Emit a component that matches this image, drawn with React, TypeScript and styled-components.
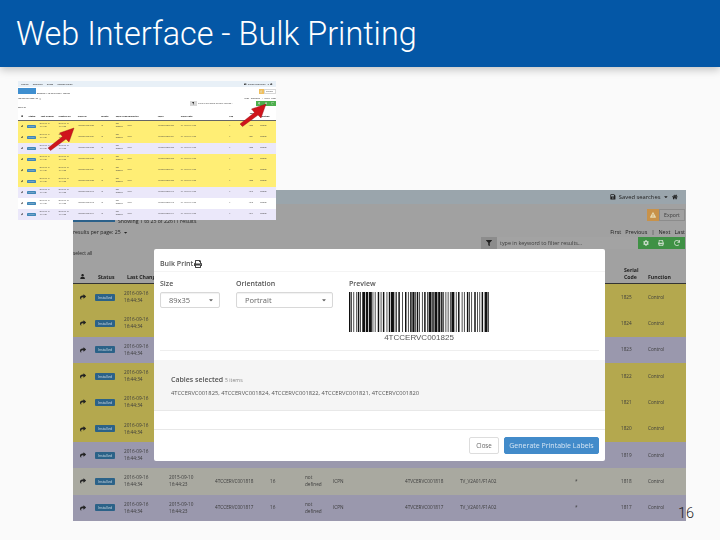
import React from 'react';
import styled, { ThemeProvider, createGlobalStyle } from 'styled-components';
import {
  FaCaretDown,
  FaCog,
  FaExclamationTriangle,
  FaFilter,
  FaHome,
  FaPrint,
  FaRedo,
  FaSave,
  FaShare,
  FaUser,
} from 'react-icons/fa';

const bright = {
  page: '#ffffff',
  nav: '#e8f0f7',
  logo: '#3f8fd0',
  hi: '#ffee75',
  alt: '#ebe8fa',
  plain: '#ffffff',
  ink: '#444444',
  strong: '#222222',
  rule: '#666666',
  badge: '#3f86b8',
  green: '#4cae4c',
  orange: '#f0c060',
  input: '#ffffff',
  line: '#d8d8d8',
};

const dimmed = {
  page: '#a1a1a1',
  nav: '#9aa5ac',
  logo: '#2b618a',
  hi: '#b4a84e',
  alt: '#9a98ad',
  plain: '#a9a9a0',
  ink: '#3c3c3c',
  strong: '#222222',
  rule: '#333333',
  badge: '#2b6288',
  green: '#3f9145',
  orange: '#c8924a',
  input: '#a3a3a3',
  line: '#8c8c8c',
};

const COLUMNS = '20px 31px 45px 46px 55px 35px 28px 72px 55px 115px 46px 27px 38px';

const GlobalStyle = createGlobalStyle`
  html, body {
    margin: 0;
    padding: 0;
    background: #fafafa;
  }
`;

const Slide = styled.div`
  position: relative;
  width: 720px;
  height: 540px;
  overflow: hidden;
  background: #fafafa;
  font-family: 'Open Sans', 'Liberation Sans', sans-serif;
`;

const Banner = styled.header`
  height: 67px;
  padding-left: 16px;
  display: flex;
  align-items: center;
  background: #0457a6;
  box-shadow: 0 3px 8px rgba(0, 0, 0, 0.22);
`;

const Title = styled.h1`
  margin: 0;
  font-family: Roboto, 'Liberation Sans', sans-serif;
  font-size: 32.4px;
  font-weight: 300;
  color: #ffffff;
  white-space: nowrap;
`;

const BigShot = styled.div`
  position: absolute;
  left: 73px;
  top: 190px;
  width: 613px;
  height: 331px;
  overflow: hidden;
  filter: blur(0.3px);
`;

const SmallShot = styled.div`
  position: absolute;
  left: 18px;
  top: 81px;
  width: 258px;
  height: 139px;
  overflow: hidden;
  filter: blur(0.4px);
`;

const SmallScale = styled.div`
  width: 613px;
  height: 330px;
  zoom: 0.421;
`;

const SheetFrame = styled.div`
  height: 100%;
  display: flex;
  flex-direction: column;
  background: ${(p) => p.theme.page};
  color: ${(p) => p.theme.ink};
`;

const NavBar = styled.nav`
  height: 14px;
  flex: none;
  padding: 0 8px 0 7px;
  display: flex;
  align-items: center;
  justify-content: space-between;
  background: ${(p) => p.theme.nav};
  color: ${(p) => p.theme.strong};
  font-size: 5.8px;
`;

const NavGroup = styled.div`
  display: flex;
  align-items: center;
  gap: ${(p) => (p.$wide ? '10px' : '3px')};
`;

const Controls = styled.div`
  height: 61px;
  flex: none;
  display: flex;
  justify-content: space-between;
`;

const ControlColumn = styled.div`
  display: flex;
  flex-direction: column;
  align-items: ${(p) => (p.$right ? 'flex-end' : 'flex-start')};
  padding-right: ${(p) => (p.$right ? '1px' : '0')};
`;

const LogoRow = styled.div`
  margin-top: 3px;
  display: flex;
  align-items: flex-end;
  gap: 3px;
`;

const Logo = styled.div`
  width: 42px;
  height: 15px;
  background: ${(p) => p.theme.logo};
`;

const Showing = styled.span`
  font-size: 5.2px;
  line-height: 9px;
  margin-bottom: -4px;
  color: ${(p) => p.theme.strong};
`;

const PerPage = styled.div`
  margin-top: 6px;
  font-size: 5.2px;
  line-height: 9px;
  display: flex;
  align-items: center;
  gap: 2px;
  color: ${(p) => p.theme.strong};
`;

const SelectAll = styled.div`
  margin-top: 12px;
  font-size: 4.8px;
  line-height: 9px;
  color: ${(p) => p.theme.strong};
`;

const ExportRow = styled.div`
  margin-top: 5px;
  display: flex;
  align-items: stretch;
  height: 12px;
`;

const ExportIcon = styled.span`
  width: 12px;
  display: flex;
  align-items: center;
  justify-content: center;
  font-size: 6px;
  color: #e6d9b0;
  background: ${(p) => p.theme.orange};
`;

const ExportButton = styled.span`
  width: 24px;
  display: flex;
  align-items: center;
  justify-content: center;
  font-size: 5.2px;
  border: 1px solid ${(p) => p.theme.line};
`;

const Pager = styled.div`
  margin-top: 7px;
  height: 9px;
  display: flex;
  gap: 4px;
  font-size: 5.5px;
  line-height: 9px;
  color: ${(p) => p.theme.strong};
`;

const FilterRow = styled.div`
  width: 204px;
  height: 12px;
  display: flex;
`;

const FilterIcon = styled.span`
  width: 15px;
  display: flex;
  align-items: center;
  justify-content: center;
  font-size: 6px;
  border-right: 1px solid ${(p) => p.theme.line};
  color: ${(p) => p.theme.strong};
  background: ${(p) => p.theme.line};
`;

const FilterInput = styled.span`
  flex: 1;
  padding-left: 3px;
  font-size: 5.4px;
  line-height: 12px;
  white-space: nowrap;
  background: ${(p) => p.theme.input};
`;

const GreenGroup = styled.span`
  width: 47px;
  display: flex;
  align-items: center;
  justify-content: space-around;
  font-size: 6px;
  color: #c8dcc8;
  background: ${(p) => p.theme.green};
`;

const TableRow = styled.div`
  display: grid;
  grid-template-columns: ${COLUMNS};
  align-items: center;
  flex: 1;
  min-height: 0;
  background: ${(p) => p.theme[p.$tone]};
`;

const HeadRow = styled.div`
  height: 19px;
  flex: none;
  display: grid;
  grid-template-columns: ${COLUMNS};
  align-items: end;
  padding-bottom: 2px;
  border-bottom: 1px solid ${(p) => p.theme.rule};
  box-sizing: border-box;
  font-size: 5.2px;
  font-weight: 700;
  line-height: 7px;
  color: ${(p) => p.theme.strong};
`;

const HeadCell = styled.span`
  padding-left: ${(p) => p.$indent || 0}px;
  text-align: ${(p) => (p.$center ? 'center' : 'left')};
`;

const Cell = styled.span`
  font-size: 4.7px;
  line-height: 7px;
  white-space: nowrap;
`;

const ArrowCell = styled.span`
  display: flex;
  justify-content: center;
  font-size: 6px;
  color: ${(p) => p.theme.strong};
`;

const Badge = styled.span`
  width: 20px;
  height: 7px;
  margin-left: 2px;
  border-radius: 1px;
  display: block;
  font-size: 3.6px;
  line-height: 7px;
  text-align: center;
  color: #cfdbe4;
  background: ${(p) => p.theme.badge};
`;

const Rows = styled.div`
  flex: 1;
  display: flex;
  flex-direction: column;
  min-height: 0;
`;

const Modal = styled.section`
  position: absolute;
  left: 81px;
  top: 59px;
  width: 451px;
  height: 212px;
  display: flex;
  flex-direction: column;
  background: #ffffff;
  border-radius: 2px;
  color: #555555;
`;

const ModalHead = styled.div`
  height: 23px;
  flex: none;
  box-sizing: border-box;
  padding: 8px 0 0 6px;
  display: flex;
  align-items: center;
  gap: 1px;
  border-bottom: 1px solid #f4f4f4;
  font-size: 7px;
  font-weight: 600;
  line-height: 10px;

  svg {
    width: 8px;
    height: 8px;
    color: #444444;
  }
`;

const ModalForm = styled.div`
  height: 79px;
  flex: none;
  box-sizing: border-box;
  margin: 0 6px;
  padding-top: 6px;
  display: flex;
  border-bottom: 1px solid #eeeeee;
`;

const Field = styled.div`
  width: ${(p) => p.$width}px;
  margin-right: 16px;
  display: flex;
  flex-direction: column;
`;

const FieldLabel = styled.label`
  height: 14px;
  font-size: 7px;
  font-weight: 600;
  line-height: 12px;
`;

const SelectBox = styled.div`
  height: 16px;
  box-sizing: border-box;
  padding: 0 5px 0 8px;
  display: flex;
  align-items: center;
  justify-content: space-between;
  border: 1px solid #d8d8d8;
  border-radius: 2px;
  box-shadow: inset 0 1px 1px rgba(0, 0, 0, 0.06);
  font-size: 7.5px;
  color: #666666;
`;

const Barcode = styled.svg`
  display: block;
  width: 140px;
  height: 40px;
`;

const BarcodeText = styled.div`
  width: 140px;
  margin-top: 1px;
  text-align: center;
  font-family: 'Liberation Sans', sans-serif;
  font-size: 8px;
  line-height: 9px;
  color: #555555;
`;

const CablesPanel = styled.div`
  height: 51px;
  flex: none;
  margin-top: 9px;
  box-sizing: border-box;
  padding: 14px 0 0 17px;
  background: #f5f5f5;
  border-bottom: 1px solid #e8e8e8;
`;

const PanelTitle = styled.div`
  font-size: 7px;
  font-weight: 600;
  line-height: 11px;
`;

const PanelCount = styled.span`
  font-size: 5.2px;
  font-weight: 400;
  color: #888888;
`;

const CableList = styled.div`
  margin-top: 2px;
  font-size: 5.75px;
  line-height: 10px;
  white-space: nowrap;
  color: #555555;
`;

const ModalGap = styled.div`
  height: 18px;
  flex: none;
  border-bottom: 1px solid #e8e8e8;
`;

const ModalFoot = styled.div`
  flex: 1;
  padding: 7px 6px 8px;
  display: flex;
  justify-content: flex-end;
  align-items: flex-start;
  gap: 5px;
`;

const Button = styled.button`
  width: ${(p) => p.$width}px;
  height: 17px;
  padding: 0;
  font-family: inherit;
  font-size: ${(p) => (p.$primary ? '7px' : '6.2px')};
  border-radius: 2px;
  border: 1px solid ${(p) => (p.$primary ? '#428bca' : '#dddddd')};
  color: ${(p) => (p.$primary ? '#d6e6f4' : '#666666')};
  background: ${(p) => (p.$primary ? '#428bca' : '#ffffff')};
`;

const PageNumber = styled.div`
  position: absolute;
  right: 26px;
  top: 505px;
  font-family: Roboto, 'Liberation Sans', sans-serif;
  font-size: 14.5px;
  font-weight: 300;
  line-height: 18px;
  color: #222222;
`;

const Pointer = styled.svg`
  position: absolute;
  left: ${(p) => p.$left}px;
  top: ${(p) => p.$top}px;
  width: 30px;
  height: 26px;
`;

const SERIALS = [
  { serial: 1825, tone: 'hi' },
  { serial: 1824, tone: 'hi' },
  { serial: 1823, tone: 'alt' },
  { serial: 1822, tone: 'hi' },
  { serial: 1821, tone: 'hi' },
  { serial: 1820, tone: 'hi' },
  { serial: 1819, tone: 'alt' },
  { serial: 1818, tone: 'plain' },
  { serial: 1817, tone: 'alt' },
];

const HEADS = [
  { label: 'Status', indent: 5 },
  { label: 'Last Change', indent: 3 },
  { label: 'Created On', indent: 0 },
  { label: 'Cable ID', indent: 0 },
  { label: 'Length', indent: 0 },
  { label: 'Cable Type', indent: 0 },
  { label: 'Connector', indent: 0 },
  { label: 'Label', indent: 0 },
  { label: 'Cable Path', indent: 0 },
  { label: 'Lab', indent: 0 },
  { label: 'Serial Code', indent: 3 },
  { label: 'Function', indent: 0 },
];

// bar, space, bar, space ... in modules, 190 of them fill the 140px preview
const BARS = [
  2, 1, 1, 2, 1, 3, 1, 1, 2, 1, 1, 2, 4, 1, 3, 1, 4, 1, 1, 2, 1, 3, 2, 2, 1, 2, 2, 3, 1, 2, 2, 1, 4, 1, 1, 1, 1, 2, 2, 3,
  1, 3, 2, 2, 1, 2, 2, 1, 3, 1, 1, 1, 2, 1, 1, 3, 1, 2, 2, 2, 1, 1, 4, 1, 2, 1, 4, 1, 3, 1, 2, 1, 1, 2, 1, 2, 1, 2, 1, 1,
  4, 2, 1, 2, 2, 3, 1, 2, 1, 3, 2, 1, 1, 2, 1, 3, 2, 2, 1, 2, 1, 2, 2, 2, 4, 1, 1,
];

const barRects = () => {
  const rects: React.ReactElement[] = [];
  let x = 0;
  BARS.forEach((width, i) => {
    if (i % 2 === 0) rects.push(<rect key={i} x={x} y={0} width={width} height={40} fill="#111" />);
    x += width;
  });
  return rects;
};

const RedArrow = ({ left, top }: { left: number; top: number }) => (
  <Pointer $left={left} $top={top} viewBox="0 0 30 26">
    <path d="M2 23 L16.5 11.5 L13.5 8 L28 3 L23 17 L20 14 L4.5 25.5 Z" fill="#d0141c" stroke="#8a1015" strokeWidth="0.4" />
  </Pointer>
);

const Sheet = () => (
  <SheetFrame>
    <NavBar>
      <NavGroup $wide>
        <span>Cables</span>
        <span>Switches</span>
        <span>Racks</span>
        <span>Rooms Fields</span>
      </NavGroup>
      <NavGroup>
        <FaSave />
        Saved searches
        <FaCaretDown />
        <FaHome />
      </NavGroup>
    </NavBar>
    <Controls>
      <ControlColumn>
        <LogoRow>
          <Logo />
          <Showing>Showing 1 to 25 of 22611 results</Showing>
        </LogoRow>
        <PerPage>results per page: 25 <FaCaretDown /></PerPage>
        <SelectAll>select all</SelectAll>
      </ControlColumn>
      <ControlColumn $right>
        <ExportRow>
          <ExportIcon><FaExclamationTriangle /></ExportIcon>
          <ExportButton>Export</ExportButton>
        </ExportRow>
        <Pager>
          <span>First</span>
          <span>Previous</span>
          <span>|</span>
          <span>Next</span>
          <span>Last</span>
        </Pager>
        <FilterRow>
          <FilterIcon><FaFilter /></FilterIcon>
          <FilterInput>type in keyword to filter results...</FilterInput>
          <GreenGroup>
            <FaCog />
            <FaPrint />
            <FaRedo />
          </GreenGroup>
        </FilterRow>
      </ControlColumn>
    </Controls>
    <HeadRow>
      <HeadCell $center><FaUser /></HeadCell>
      {HEADS.map(({ label, indent }) => (
        <HeadCell key={label} $indent={indent}>{label}</HeadCell>
      ))}
    </HeadRow>
    <Rows>
      {SERIALS.map(({ serial, tone }) => (
        <TableRow key={serial} $tone={tone}>
          <ArrowCell><FaShare /></ArrowCell>
          <Cell><Badge>Installed</Badge></Cell>
          <Cell>2016-09-16<br />16:44:34</Cell>
          <Cell>2015-09-10<br />16:44:23</Cell>
          <Cell>4TCCERVC00{serial}</Cell>
          <Cell>16</Cell>
          <Cell>not<br />defined</Cell>
          <Cell>ICPN</Cell>
          <Cell>4TVCERVC00{serial}</Cell>
          <Cell>TV_V2A01/F1A02</Cell>
          <Cell>*</Cell>
          <Cell>{serial}</Cell>
          <Cell>Control</Cell>
        </TableRow>
      ))}
    </Rows>
  </SheetFrame>
);

const BulkPrintModal = () => (
  <Modal>
    <ModalHead>
      <span>Bulk Print</span>
      <FaPrint />
    </ModalHead>
    <ModalForm>
      <Field $width={60}>
        <FieldLabel>Size</FieldLabel>
        <SelectBox>89x35<FaCaretDown size={6} /></SelectBox>
      </Field>
      <Field $width={97}>
        <FieldLabel>Orientation</FieldLabel>
        <SelectBox>Portrait<FaCaretDown size={6} /></SelectBox>
      </Field>
      <Field $width={140}>
        <FieldLabel>Preview</FieldLabel>
        <Barcode viewBox="0 0 190 40" preserveAspectRatio="none">{barRects()}</Barcode>
        <BarcodeText>4TCCERVC001825</BarcodeText>
      </Field>
    </ModalForm>
    <CablesPanel>
      <PanelTitle>Cables selected <PanelCount>5 items</PanelCount></PanelTitle>
      <CableList>4TCCERVC001825, 4TCCERVC001824, 4TCCERVC001822, 4TCCERVC001821, 4TCCERVC001820</CableList>
    </CablesPanel>
    <ModalGap />
    <ModalFoot>
      <Button $width={30}>Close</Button>
      <Button $width={95} $primary>Generate Printable Labels</Button>
    </ModalFoot>
  </Modal>
);

const App: React.FC = () => (
  <>
    <GlobalStyle />
    <Slide>
      <Banner>
        <Title>Web Interface - Bulk Printing</Title>
      </Banner>
      <BigShot>
        <ThemeProvider theme={dimmed}>
          <Sheet />
        </ThemeProvider>
        <BulkPrintModal />
      </BigShot>
      <SmallShot>
        <SmallScale>
          <ThemeProvider theme={bright}>
            <Sheet />
          </ThemeProvider>
        </SmallScale>
      </SmallShot>
      <RedArrow left={46} top={125} />
      <RedArrow left={238} top={101} />
      <PageNumber>16</PageNumber>
    </Slide>
  </>
);

export default App;
